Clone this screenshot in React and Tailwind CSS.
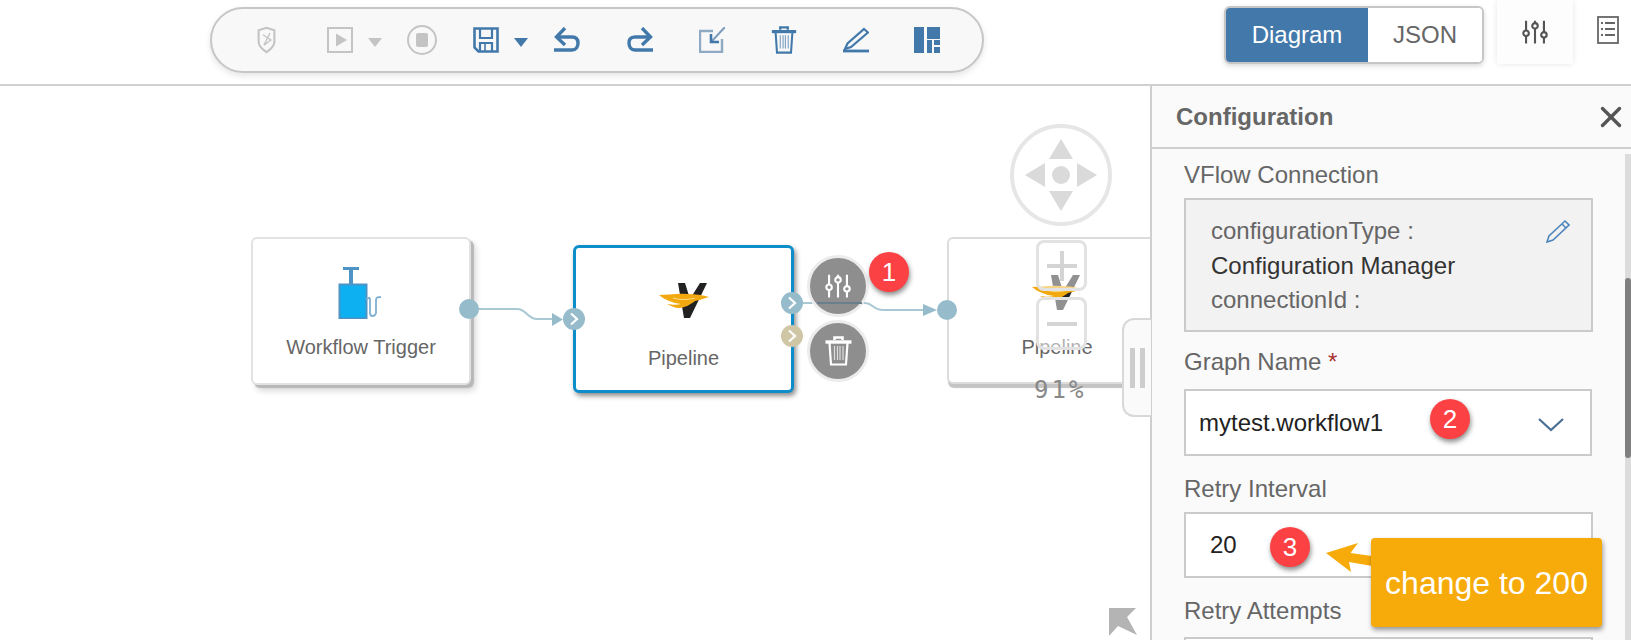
import React from 'react';
import { X } from 'lucide-react';

const SANS = "font-['Liberation_Sans',Arial,sans-serif]";

function Sliders({ className, color = 'currentColor' }) {
  return (
    <svg viewBox="0 0 32 32" className={className} fill="none" stroke={color} strokeWidth="2.6">
      <path d="M5 2v12M5 21v9M16 2v3M16 12v18M27 2v14M27 23v7" />
      <circle cx="5" cy="17.5" r="3.4" />
      <circle cx="16" cy="8.5" r="3.4" />
      <circle cx="27" cy="19.5" r="3.4" />
    </svg>
  );
}

function TrashIcon({ className, color = '#4279aa' }) {
  return (
    <svg viewBox="0 0 26 30" className={className} fill="none" stroke={color} strokeWidth="2.2">
      <path d="M0 6h26" strokeWidth="3.4" />
      <path d="M9 4V1.500h8V4" strokeWidth="2.6" />
      <path d="M4 7l1.500 21.500h15L22 7" />
      <path d="M9 10v14M12 10v14M14.500 10v14M17.500 10v14" strokeWidth="1.2" opacity="0.7" />
    </svg>
  );
}

function PipelineLogo({ className }) {
  return (
    <svg viewBox="0 0 50 36" className={className}>
      <path d="M19 0h7l5 16L41 0h7L31 35h-6z" fill="#222" />
      <path d="M0 12c8 0 18-2 28-1 8 0 16 1 22 3-6 2-10 3-14 4-4 3-10 7-16 7-4 0-8-2-12-4 6 1 10 1 14 0C14 20 6 17 0 12z" fill="#f2a90f" />
      <path d="M14 15c7 2 14 2 22 0" stroke="#f9dc8c" strokeWidth="1" fill="none" />
    </svg>
  );
}

function Chevron({ className }) {
  return (
    <svg viewBox="0 0 10 14" className={className} fill="none" stroke="#fff" strokeWidth="2.2">
      <path d="M2 1.500L8 7l-6 5.500" />
    </svg>
  );
}

function Badge({ n, className }) {
  return (
    <div className={`absolute flex h-10 w-10 items-center justify-center rounded-full bg-[#fb4143] text-[26px] text-white shadow-[1px_3px_5px_rgba(0,0,0,0.45)] ${className}`}>
      {n}
    </div>
  );
}

function Node({ className, label, children, labelClass = '' }) {
  return (
    <div className={`absolute flex flex-col items-center rounded-md bg-white ${className}`}>
      {children}
      <span className={`text-[20px] text-[#666] ${labelClass}`}>{label}</span>
    </div>
  );
}

function Toolbar() {
  const blue = '#4279aa';
  const grey = '#c4c4c4';
  return (
    <div className="ml-[210px] mt-[7px] flex h-[66px] w-[774px] items-center rounded-[33px] border-2 border-[#c6c6c6] bg-[#f8f8f8] shadow-[0_3px_6px_rgba(0,0,0,0.1)]">
      <svg viewBox="0 0 24 30" className="ml-[44px] h-[28px] w-[21px]" fill="none" stroke={grey} strokeWidth="2.4">
        <path d="M12 1l9 3v13c0 6-5 9-9 12-4-3-9-6-9-12V4z" />
        <path d="M8 9l9 6-8 6M16 7l-7 14" strokeWidth="1.600" />
      </svg>
      <svg viewBox="0 0 26 26" className="ml-[50px] h-[26px] w-[26px]" fill="none" stroke={grey} strokeWidth="2">
        <rect x="1" y="1" width="24" height="24" />
        <path d="M9 6.500l11 6.500-11 6.500z" fill={grey} stroke="none" />
      </svg>
      <svg viewBox="0 0 14 9" className="ml-[14px] mt-[4px] h-[9px] w-[16px]"><path d="M0 0h14L7 9z" fill={grey} /></svg>
      <svg viewBox="0 0 30 30" className="ml-[24px] h-[30px] w-[30px]" fill="none" stroke={grey} strokeWidth="2">
        <circle cx="15" cy="15" r="14" />
        <rect x="9" y="8" width="12" height="14" rx="2" fill={grey} stroke="none" />
      </svg>
      <svg viewBox="0 0 26 26" className="ml-[36px] h-[26px] w-[26px]" fill="none" stroke={blue} strokeWidth="2.600">
        <path d="M1.500 1.500h23v23h-19l-4-4z" />
        <path d="M7 2v9h12V2M7 24v-8h12v8" strokeWidth="2.200" />
        <path d="M12 17v7" strokeWidth="1.600" />
      </svg>
      <svg viewBox="0 0 14 9" className="ml-[14px] mt-[4px] h-[9px] w-[16px]"><path d="M0 0h14L7 9z" fill={blue} /></svg>
      <svg viewBox="0 0 26 26" className="ml-[25px] h-[26px] w-[26px]" fill="none" stroke={blue} strokeWidth="3.400">
        <path d="M11 1L2.500 10l8.500 8" />
        <path d="M2.500 10H18c5 0 6 3 6 6 0 4-2 7-6 7H0" />
      </svg>
      <svg viewBox="0 0 26 26" className="ml-[47px] h-[26px] w-[26px]" fill="none" stroke={blue} strokeWidth="3.400">
        <path d="M15 1l8.500 9-8.500 8" />
        <path d="M23.500 10H8c-5 0-6 3-6 6 0 4 2 7 6 7h18" />
      </svg>
      <svg viewBox="0 0 26 26" className="ml-[46px] h-[26px] w-[26px]" fill="none" stroke={blue}>
        <path d="M14 4H1v21h22V12" stroke="#8da9c4" strokeWidth="2.400" />
        <path d="M26 0L13 14" strokeWidth="2" stroke="#7c9cbc" />
        <path d="M12 7v8h8" strokeWidth="2.600" />
      </svg>
      <TrashIcon className="ml-[46px] h-[28px] w-[26px]" />
      <svg viewBox="0 0 26 26" className="ml-[46px] h-[26px] w-[26px]" fill="none" stroke={blue} strokeWidth="2.200">
        <path d="M21 2l4 3.500L8 20l-6 2 2.500-5.500z" />
        <path d="M0 24h26" strokeWidth="2.800" />
      </svg>
      <svg viewBox="0 0 26 26" className="ml-[45px] h-[26px] w-[26px]" fill={blue}>
        <rect x="0" y="0" width="10" height="26" />
        <rect x="13" y="0" width="13" height="12" />
        <rect x="13" y="13" width="5" height="13" />
        <rect x="20" y="13" width="6" height="5" />
        <rect x="20" y="20" width="6" height="6" />
      </svg>
    </div>
  );
}

function Canvas() {
  return (
    <div className="relative flex-1 overflow-hidden bg-white">
      {/* wires, the canvas starts at y=86 */}
      <svg className="absolute left-[460px] top-[200px] h-[50px] w-[500px]" viewBox="0 0 500 50" fill="none" stroke="#a9c8d4" strokeWidth="2">
        <path d="M10 23h47c10 0 10 10 20 10h16" />
        <path d="M92 27l11 6.500-11 6.500z" fill="#96bccb" stroke="none" />
        <path d="M340 17h65c8 0 8 7 18 7h40" />
        <path d="M463 18l14 6-14 6z" fill="#96bccb" stroke="none" />
      </svg>

      <Node className="left-[251px] top-[151px] h-[148px] w-[220px] border-2 border-[#e2e2e2] shadow-[3px_3px_1px_#b8b8b8,5px_6px_6px_rgba(0,0,0,0.15)]" label="Workflow Trigger" labelClass="mt-[13px]">
        <svg viewBox="0 0 46 52" className="mt-7 h-[52px] w-[46px]" fill="none">
          <path d="M5 1h16M13 1v16" stroke="#4d93c6" strokeWidth="4" />
          <rect x="1.500" y="17.500" width="27" height="34" fill="#0db0f0" stroke="#4d93c6" strokeWidth="2" />
          <path d="M28 32c3 0 3-3 4 0v14c0 4 5 4 6 0V33c0-3 2-3 5-3" stroke="#7fb0d4" strokeWidth="1.800" />
        </svg>
      </Node>

      <Node className="left-[573px] top-[159px] h-[148px] w-[221px] border-[3px] border-[#0d8ecb] shadow-[2px_3px_5px_rgba(0,0,0,0.45)]" label="Pipeline" labelClass="mt-[24px]">
        <PipelineLogo className="mt-[35px] h-[36px] w-[50px]" />
      </Node>

      <Node className="left-[947px] top-[151px] h-[147px] w-[220px] border-2 border-[#dcdcdc] shadow-[1px_4px_1px_#c4c4c4]" label="Pipeline" labelClass="mt-[21px]">
        <PipelineLogo className="mt-[36px] h-[36px] w-[50px]" />
      </Node>

      {/* ports */}
      <div className="absolute left-[459px] top-[213px] h-5 w-5 rounded-full bg-[#96bccb]" />
      <div className="absolute left-[563px] top-[222px] flex h-[22px] w-[22px] items-center justify-center rounded-full bg-[#96bccb]"><Chevron className="h-3.5 w-2.5" /></div>
      <div className="absolute left-[781px] top-[206px] flex h-[22px] w-[22px] items-center justify-center rounded-full bg-[#96bccb]"><Chevron className="h-3.5 w-2.5" /></div>
      <div className="absolute left-[781px] top-[239px] flex h-[22px] w-[22px] items-center justify-center rounded-full bg-[#cfc6a6]"><Chevron className="h-3.5 w-2.5" /></div>
      <div className="absolute left-[937px] top-[214px] h-5 w-5 rounded-full bg-[#96bccb]" />

      {/* node actions */}
      <div className="absolute left-[807px] top-[169px] flex h-[62px] w-[62px] items-center justify-center rounded-full border-[3px] border-[#ececec] bg-[#8e8e8e]">
        <Sliders className="h-[26px] w-[30px]" color="#fff" />
      </div>
      <div className="absolute left-[817px] top-[216px] h-[2px] w-[45px] bg-[#6a7f8c]" />
      <div className="absolute left-[807px] top-[234px] flex h-[62px] w-[62px] items-center justify-center rounded-full border-[3px] border-[#ececec] bg-[#8e8e8e]">
        <TrashIcon className="h-[30px] w-[27px]" color="#fff" />
      </div>
      <Badge n="1" className="left-[869px] top-[166px]" />

      {/* navigator */}
      <svg viewBox="0 0 104 104" className="absolute left-[1009px] top-[37px] h-[104px] w-[104px]" fill="#dadada">
        <circle cx="52" cy="52" r="49" fill="none" stroke="#e6e6e6" strokeWidth="4" />
        <path d="M52 16l12 20H40zM52 88l12-20H40zM16 52l20-12v24zM88 52L68 40v24z" />
        <circle cx="52" cy="52" r="9" />
      </svg>
      <div className="absolute left-[1036px] top-[154px] flex h-[51px] w-[51px] items-center justify-center rounded-lg border-[3px] border-[#e2e2e2] bg-white/50">
        <svg viewBox="0 0 30 30" className="h-[30px] w-[30px]"><path d="M15 0v30M0 15h30" stroke="#d4d4d4" strokeWidth="4" /></svg>
      </div>
      <div className="absolute left-[1036px] top-[211px] flex h-[53px] w-[51px] items-center justify-center rounded-lg border-[3px] border-[#e2e2e2] bg-white/50">
        <div className="h-1 w-[30px] bg-[#d4d4d4]" />
      </div>
      <span className="absolute left-[1034px] top-[286px] font-['DejaVu_Sans_Mono',monospace] text-[24px] tracking-[3px] text-[#888]">91%</span>

      {/* corner arrow */}
      <svg viewBox="0 0 28 28" className="absolute left-[1109px] top-[522px] h-7 w-7" fill="#b4b4b4">
        <path d="M0 0h27L18 9l10 18L9 18 0 28z" />
      </svg>
    </div>
  );
}

function Field({ label, children, className = '' }) {
  return (
    <div className={className}>
      <div className="text-[24px] leading-[24px] text-[#666]">{label}</div>
      {children}
    </div>
  );
}

function Panel() {
  return (
    <div className="relative flex h-full w-[481px] shrink-0 flex-col border-l-2 border-[#cfcfcf] bg-[#fafafa]">
      {/* resize handle */}
      <div className="absolute left-[-30px] top-[232px] flex h-[99px] w-[29px] items-center gap-[5px] rounded-l-xl border-2 border-r-0 border-[#d8d8d8] bg-[#fafafa] pl-[6px]">
        <div className="h-10 w-[5px] bg-[#cdcdcd]" />
        <div className="h-10 w-[5px] bg-[#cdcdcd]" />
      </div>

      <div className="flex h-[63px] shrink-0 items-center justify-between border-b-2 border-[#cfcfcf] pl-6 pr-[3px]">
        <span className="text-[24px] font-bold text-[#666]">Configuration</span>
        <X className="h-[34px] w-[34px] text-[#555]" strokeWidth={2.4} />
      </div>

      <div className="relative flex-1 overflow-hidden">
        {/* scrollbar */}
        <div className="absolute bottom-0 right-0 top-[5px] w-[6px] bg-[#dcdcdc]">
          <div className="ml-0 mt-[124px] h-[180px] w-full rounded-sm bg-[#7f7f7f]" />
        </div>

        <div className="ml-[32px] w-[410px] pt-[14px]">
          <Field label="VFlow Connection">
            <div className="mt-[11px] flex h-[134px] w-[409px] justify-between border-2 border-[#cacaca] bg-[#f2f2f2] pl-[25px] pr-[21px] pt-[14px] text-[24px] leading-[34.5px]">
              <div>
                <div className="text-[#666]">configurationType :</div>
                <div className="text-[#333]">Configuration Manager</div>
                <div className="text-[#666]">connectionId :</div>
              </div>
              <svg viewBox="0 0 24 24" className="mt-[5px] h-6 w-6" fill="none" stroke="#4d86bb" strokeWidth="1.600">
                <path d="M19 2l4 4L7 21l-6 2 2-6zM16 5l4 4" />
              </svg>
            </div>
          </Field>

          <Field label={<span>Graph Name <span className="text-[#a33]">*</span></span>} className="mt-[18px]">
            <div className="relative mt-[15px] flex h-[67px] w-[408px] items-center justify-between border-2 border-[#cacaca] bg-white pl-[13px] pr-[26px] text-[24px] text-[#222]">
              <span>mytest.workflow1</span>
              <svg viewBox="0 0 26 14" className="mt-[4px] h-[14px] w-[26px]" fill="none" stroke="#4a6f96" strokeWidth="2.200"><path d="M1 1l12 11L25 1" /></svg>
              <Badge n="2" className="left-[244px] top-[8px]" />
            </div>
          </Field>

          <Field label="Retry Interval" className="mt-[21px]">
            <div className="relative mt-[11px] flex h-[66px] w-[409px] items-center border-2 border-[#cacaca] bg-white pl-[24px] text-[24px] text-[#222]">
              <span>20</span>
              <Badge n="3" className="left-[84px] top-[13px]" />
            </div>
          </Field>

          <Field label="Retry Attempts" className="mt-[21px]">
            <div className="mt-[14px] h-[60px] w-[409px] border-2 border-[#cacaca] bg-white" />
          </Field>
        </div>

        {/* callout */}
        <svg viewBox="0 0 46 29" className="absolute left-[174px] top-[394px] h-[29px] w-[46px]" fill="#f7ab0a">
          <path d="M0 10L32 0l-7.500 10L46 13v10L23 19l2 10z" />
        </svg>
        <div className="absolute left-[219px] top-[389px] flex h-[89px] w-[231px] items-center justify-center rounded-[4px] bg-[#f7ab0a] text-[32px] text-white shadow-[1px_3px_5px_rgba(0,0,0,0.4)]">
          change to 200
        </div>
      </div>
    </div>
  );
}

export default function App() {
  return (
    <div className={`flex h-[640px] w-[1631px] flex-col overflow-hidden bg-white ${SANS}`}>
      <header className="flex h-[86px] shrink-0 border-b-2 border-[#d0d0d0] bg-white">
        <Toolbar />
        <div className="ml-[240px] mt-[6px] flex h-[58px] w-[260px] overflow-hidden rounded-md border-2 border-[#c6c6c6] text-[24px] shadow-[0_2px_5px_rgba(0,0,0,0.15)]">
          <div className="flex w-[142px] items-center justify-center bg-[#4279aa] text-white">Diagram</div>
          <div className="flex flex-1 items-center justify-center bg-white text-[#666]">JSON</div>
        </div>
        <div className="ml-[13px] flex h-[64px] w-[76px] items-center justify-center bg-[#fdfdfd] shadow-[0_0_6px_rgba(0,0,0,0.1)]">
          <Sliders className="h-[26px] w-[30px] text-[#555]" />
        </div>
        <div className="ml-[24px] mt-[16px] h-[28px] w-[22px]">
          <svg viewBox="0 0 22 28" className="h-[28px] w-[22px]" fill="none" stroke="#666" strokeWidth="1.800">
            <rect x="1" y="1" width="20" height="26" />
            <path d="M4 7h2M8 7h10M4 13h2M8 13h10M4 19h2M8 19h10" />
          </svg>
        </div>
      </header>
      <div className="flex min-h-0 flex-1">
        <Canvas />
        <Panel />
      </div>
    </div>
  );
}
